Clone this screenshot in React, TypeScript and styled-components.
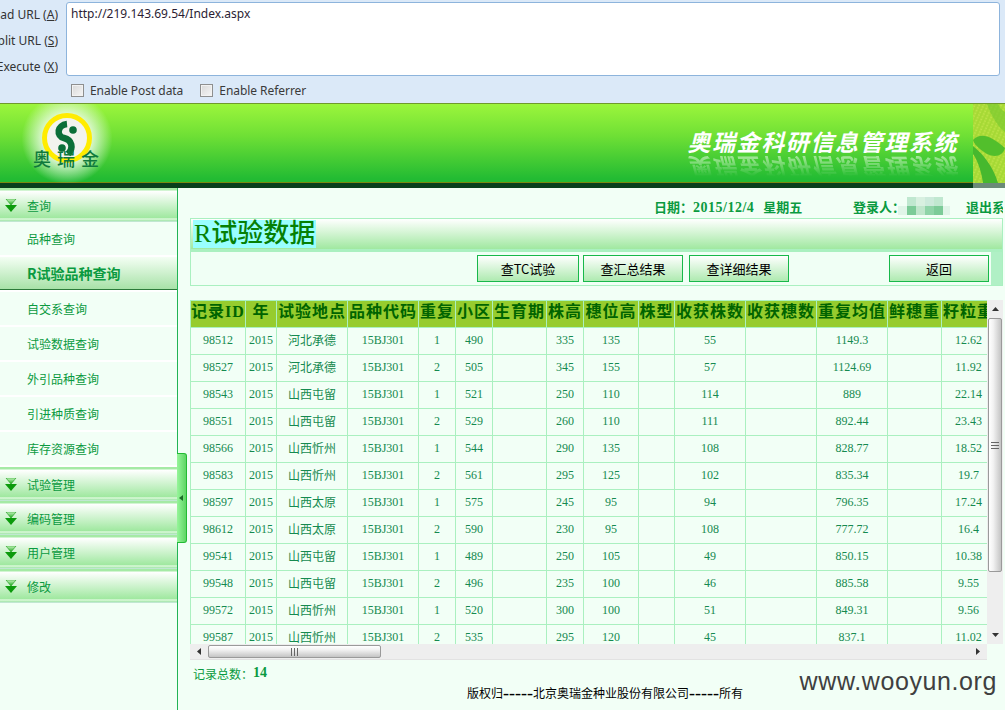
import React from "react";
import styled, { createGlobalStyle } from "styled-components";

const sansCn = `"Noto Sans CJK SC", "Liberation Sans", sans-serif`;
const serifCn = `"Liberation Serif", "Noto Sans CJK SC", serif`;

const GlobalStyle = createGlobalStyle`
  html, body {
    margin: 0;
    padding: 0;
    background: #f2fff6;
    overflow: hidden;
  }
  * {
    box-sizing: border-box;
  }
`;

const Page = styled.div`
  position: relative;
  width: 1005px;
  height: 710px;
  overflow: hidden;
  background: #f2fff6;
  font-family: ${serifCn};
  font-size: 12px;
`;

/* hackbar on top of the browser */
const Toolbar = styled.div`
  display: flex;
  height: 103px;
  padding: 2px 5px 0 0;
  background: #dbe9f8;
  font-family: "Noto Sans", "Liberation Sans", sans-serif;
  color: #333;
`;

const ActionList = styled.div`
  width: 58px;
  margin: -1px 8px 0 0;
  overflow: hidden;
`;

const Action = styled.div`
  display: flex;
  justify-content: flex-end;
  align-items: center;
  height: 26px;
  white-space: nowrap;
  u {
    text-decoration: underline;
  }
`;

const UrlColumn = styled.div`
  flex: 1;
  display: flex;
  flex-direction: column;
`;

const UrlBox = styled.textarea`
  display: block;
  width: 100%;
  height: 74px;
  padding: 3px 4px;
  border: 1px solid #8db4dc;
  border-radius: 3px;
  background: #fff;
  color: #2b1d33;
  font-family: "Noto Sans", "Liberation Sans", sans-serif;
  font-size: 12px;
  line-height: 16px;
  resize: none;
  outline: none;
  overflow: hidden;
`;

const OptionRow = styled.div`
  display: flex;
  gap: 17px;
  padding: 6px 0 0 5px;
`;

const Option = styled.label`
  display: flex;
  align-items: center;
  gap: 6px;
  height: 16px;
  font-size: 12px;
  letter-spacing: -0.05px;
  color: #3a3a3a;
`;

const CheckBox = styled.span`
  width: 13px;
  height: 13px;
  border: 1px solid #8e8f8f;
  background: linear-gradient(135deg, #d8d8d8, #f6f6f6);
  box-shadow: inset 0 0 0 1px #f2f2f2;
`;

/* site banner */
const Banner = styled.header`
  display: flex;
  align-items: flex-start;
  height: 85px;
  border-top: 1px solid #6f9a2c;
  background: linear-gradient(to bottom, #9cf53c 0, #6fe035 40%, #22bb33 95%);
  border-bottom: 5px solid #073f1c;
  box-shadow: inset 0 -1px 0 #7a8a10;
`;

const LogoGlow = styled.div`
  width: 90px;
  height: 79px;
  margin-left: 22px;
  background: radial-gradient(circle at 50% 44%, #ffffff 0, rgba(240, 252, 236, 0.95) 34%, rgba(255, 255, 255, 0) 72%);
`;

const BannerTitle = styled.div`
  margin-left: auto;
  margin-right: 15px;
  padding-top: 22px;
  display: flex;
  flex-direction: column;
  align-items: flex-end;
  font-family: ${sansCn};
  font-size: 23px;
  font-style: italic;
  font-weight: 700;
  line-height: 30px;
  letter-spacing: 1.6px;
  color: #fff;
  white-space: nowrap;
`;

const BannerReflection = styled.div`
  height: 24px;
  line-height: 24px;
  transform: scaleY(-1);
  opacity: 0.5;
  mask-image: linear-gradient(to top, #000, transparent 85%);
`;

const Corn = styled.svg`
  flex: none;
  display: block;
  width: 32px;
  height: 84px;
  margin-bottom: -5px;
`;

const Body = styled.div`
  display: flex;
  height: 522px;
`;

const Sidebar = styled.nav`
  position: relative;
  flex: none;
  width: 178px;
  border-right: 1px solid #22b455;
  color: #0a9a40;
  font-family: ${sansCn};
  font-size: 12px;
`;

const MenuHead = styled.div`
  display: flex;
  align-items: center;
  gap: 9px;
  height: 34px;
  padding: 1px 0 0 4px;
  background: linear-gradient(
    to bottom,
    #a5eaa5 0,
    #a5eaa5 2px,
    #ffffff 3px,
    #9fe89f 30px,
    #f4fff4 31px,
    #a5eaa5 32px,
    #c9e6e0 34px
  );
`;

const MenuItem = styled.div<{ $active?: boolean }>`
  display: flex;
  align-items: center;
  height: 33px;
  margin-bottom: 2px;
  padding: 0 0 1px 27px;
  font-size: ${(p) => (p.$active ? "14px" : "12px")};
  font-weight: ${(p) => (p.$active ? 700 : 400)};
  background: ${(p) => (p.$active ? "linear-gradient(to bottom, #f4fff4, #a8e2a8)" : "transparent")};
  border-bottom: ${(p) => (p.$active ? "1px solid #2c7a3a" : "none")};
  box-shadow: 0 2px 0 #ffffff;
`;

const MenuGroup = styled.div`
  height: 245px;
`;

const Collapser = styled.div`
  position: absolute;
  left: 100%;
  top: 265px;
  display: flex;
  align-items: center;
  width: 10px;
  height: 90px;
  padding-left: 2px;
  border: 1px solid #22bb33;
  border-left: none;
  border-radius: 0 3px 3px 0;
  background: linear-gradient(to right, #96f59a, #5fd565);
`;

const CollapserArrow = styled.span`
  width: 0;
  height: 0;
  border-top: 3.5px solid transparent;
  border-bottom: 3.5px solid transparent;
  border-right: 4px solid #1b6b27;
`;

const Main = styled.main`
  flex: 1;
  min-width: 0;
  padding: 0 2px 0 12px;
`;

const InfoBar = styled.div`
  display: flex;
  align-items: center;
  height: 30px;
  padding: 6px 0 0 464px;
  color: #0a9a40;
  font-family: ${sansCn};
  font-size: 13px;
  font-weight: 700;
  white-space: nowrap;
  overflow: hidden;
`;

const InfoDate = styled.span`
  width: 199px;
  flex: none;
  b {
    font-family: "Liberation Serif", serif;
    font-size: 14px;
    margin-right: 9px;
    letter-spacing: 0.5px;
  }
`;

const InfoUser = styled.span`
  flex: none;
`;

const Mosaic = styled.svg`
  flex: none;
  display: block;
  width: 52px;
  height: 18px;
  margin: 0 16px 0 -7px;
`;

const TitleBar = styled.div`
  height: 32px;
  padding: 1px 0 0 2px;
  border: 1px solid #aaf0c0;
  background: linear-gradient(to bottom, #ffffff, #a0e8a0);
`;

const TitleMark = styled.h1`
  display: inline-block;
  margin: 0;
  padding: 0 1px;
  height: 28px;
  background: #9ff;
  color: #058005;
  font-family: ${serifCn};
  font-size: 26px;
  font-weight: 500;
  line-height: 28px;
`;

const ButtonRow = styled.div`
  display: flex;
  align-items: center;
  height: 36px;
  padding-left: 286px;
  border: 1px solid #aaf0c0;
  border-top-width: 2px;
  background: linear-gradient(to right, #f0fff5 calc(100% - 11px), #b0f0c5 0);
`;

const Button = styled.button<{ $wide?: boolean; $gap?: number }>`
  width: ${(p) => (p.$wide ? 102 : 100)}px;
  height: 27px;
  margin-right: ${(p) => p.$gap ?? 0}px;
  padding: 0;
  border: 1px solid #18b84a;
  background: linear-gradient(to bottom, #ffffff, #aeeab0);
  color: #000;
  font-family: ${sansCn};
  font-size: 13px;
`;

const GridFrame = styled.div`
  display: grid;
  grid-template-columns: 797px 16px;
  grid-template-rows: 344px 16px;
  margin-top: 14px;
`;

const TableClip = styled.div`
  grid-column: 1;
  grid-row: 1;
  overflow: hidden;
`;

const DataTable = styled.table`
  width: 805px;
  table-layout: fixed;
  border-collapse: collapse;
  font-family: ${serifCn};
`;

const HeadCell = styled.th`
  height: 27px;
  padding: 0 0 4px;
  border: 1px solid #aaf0c0;
  background: #96cc2e;
  color: #006400;
  font-family: ${serifCn};
  font-size: 16px;
  font-weight: 700;
  line-height: 20px;
  letter-spacing: 1px;
  white-space: nowrap;
  overflow: hidden;
`;

const Cell = styled.td<{ $cn?: boolean }>`
  height: 27px;
  padding: 0 0 2px;
  border: 1px solid #aaf0c0;
  color: #158a50;
  font-family: ${(p) => (p.$cn ? sansCn : serifCn)};
  font-size: 12px;
  line-height: 16px;
  text-align: center;
  white-space: nowrap;
`;

const Column = styled.col<{ $w: number }>`
  width: ${(p) => p.$w}px;
`;

const VScroll = styled.div`
  display: flex;
  flex-direction: column;
  grid-column: 2;
  grid-row: 1;
  background: #eeeeee;
`;

const HScroll = styled.div`
  display: flex;
  align-items: stretch;
  grid-column: 1;
  grid-row: 2;
  background: #eeeeee;
  border-bottom: 1px solid #e2e2e2;
`;

const ArrowCell = styled.div<{ $w?: string; $h?: string }>`
  flex: none;
  display: flex;
  align-items: center;
  justify-content: center;
  width: ${(p) => p.$w ?? "auto"};
  height: ${(p) => p.$h ?? "auto"};
  color: #333;
`;

const Spacer = styled.div`
  flex: 1;
`;

const ThumbV = styled.div`
  flex: none;
  display: flex;
  align-items: center;
  justify-content: center;
  height: 254px;
  margin: 0 1px;
  border: 1px solid #9a9a9a;
  border-radius: 2px;
  background: linear-gradient(to right, #ffffff, #f2f2f2 35%, #c4c4c4);
`;

const ThumbH = styled.div`
  flex: none;
  display: flex;
  align-items: center;
  justify-content: center;
  width: 173px;
  margin: 1px 0;
  border: 1px solid #9a9a9a;
  border-radius: 2px;
  background: linear-gradient(to bottom, #ffffff, #f2f2f2 35%, #c4c4c4);
`;

const Grip = styled.svg`
  display: block;
`;

const TotalLine = styled.div`
  display: flex;
  align-items: center;
  height: 18px;
  margin-top: 4px;
  padding-left: 3px;
  color: #0a9a40;
  font-family: ${sansCn};
  font-size: 12px;
  b {
    font-family: ${serifCn};
    font-size: 14px;
  }
`;

const Copyright = styled.div`
  height: 16px;
  margin-top: 3px;
  padding-left: 277px;
  color: #000;
  font-family: ${sansCn};
  font-size: 12px;
  line-height: 16px;
  white-space: nowrap;
`;

const Dashes = styled.span`
  font-family: "Liberation Serif", serif;
  font-size: 18px;
  line-height: 0;
  vertical-align: -1px;
`;

const Watermark = styled.div`
  position: absolute;
  right: 8px;
  bottom: 14px;
  color: #3f4040;
  font-family: "Liberation Sans", sans-serif;
  font-size: 25px;
  line-height: 30px;
  letter-spacing: 0.6px;
`;

const DoubleArrow = () => (
  <svg width="14" height="14" viewBox="0 0 14 14">
    <defs>
      <linearGradient id="arrowTop" x1="0" y1="0" x2="0" y2="1">
        <stop offset="0" stopColor="#c8f5c0" />
        <stop offset="1" stopColor="#18a818" />
      </linearGradient>
    </defs>
    <polygon points="2,0 12,0 7,6" fill="url(#arrowTop)" stroke="#1a9a1a" strokeWidth="0.6" />
    <polygon points="1,6 13,6 7,13" fill="#0c9a0c" />
  </svg>
);

const Triangle = ({ dir }: { dir: "up" | "down" | "left" | "right" }) => {
  const points = {
    up: "0,4 7,4 3.5,0",
    down: "0,0 7,0 3.5,4",
    left: "4,0 4,7 0,3.5",
    right: "0,0 0,7 4,3.5",
  }[dir];
  const wide = dir === "up" || dir === "down";
  return (
    <svg width={wide ? 7 : 4} height={wide ? 4 : 7}>
      <polygon points={points} fill="#333" />
    </svg>
  );
};

const Logo = () => (
  <svg width="90" height="79" viewBox="0 0 90 79">
    <circle cx="45" cy="34" r="22.5" fill="#f2f3ee" stroke="#ffec00" strokeWidth="5" />
    <circle cx="51" cy="26" r="3.8" fill="#0a6f38" />
    <circle cx="40" cy="44" r="3.8" fill="#0a6f38" />
    <path d="M45 20 C35 21 34 32 42 34 C50 36 52 44 46 50" fill="none" stroke="#0a6f38" strokeWidth="6.5" />
    <text
      x="47"
      y="62"
      textAnchor="middle"
      fontFamily={`"Noto Sans CJK SC", sans-serif`}
      fontSize="18"
      fontWeight="500"
      letterSpacing="6"
      fill="#107a3c"
    >
      奥瑞金
    </text>
  </svg>
);

const CornArt = () => (
  <Corn viewBox="0 0 32 84" preserveAspectRatio="none">
    <defs>
      <pattern id="kernels" width="4" height="3" patternUnits="userSpaceOnUse" patternTransform="rotate(25)">
        <rect width="4" height="3" fill="#a6d935" />
        <circle cx="2" cy="1.5" r="1" fill="#bfe64a" />
      </pattern>
    </defs>
    <rect width="32" height="84" fill="url(#kernels)" />
    <path d="M14 0 C18 12 26 24 32 28 L32 8 C28 6 26 2 25 0 Z" fill="#7ccb30" opacity="0.7" />
    <path d="M0 36 C8 28 18 32 32 44 C30 52 22 54 14 50 C8 46 2 42 0 36 Z" fill="#52bf2c" />
    <path d="M0 42 C10 50 20 62 25 79 L10 79 C8 64 3 54 0 50 Z" fill="#46b82e" />
    <rect y="79" width="32" height="5" fill="#6b8a78" />
  </Corn>
);

const mosaicCells: [number, number, number, string][] = [
  [9, 0, 9, "#c0e8d0"],
  [18, 0, 9, "#d8f0e0"],
  [27, 0, 9, "#cceadb"],
  [36, 0, 9, "#c0e8d0"],
  [0, 9, 9, "#e0f5e8"],
  [9, 9, 9, "#7ccb98"],
  [18, 9, 9, "#c0e6cc"],
  [27, 9, 9, "#8fd4a8"],
  [36, 9, 9, "#7ccb98"],
  [45, 9, 7, "#e0f5e8"],
];

const columns = [55, 31, 71, 71, 37, 37, 54, 37, 55, 36, 71, 71, 71, 54, 54];

const headers = [
  "记录ID",
  "年",
  "试验地点",
  "品种代码",
  "重复",
  "小区",
  "生育期",
  "株高",
  "穗位高",
  "株型",
  "收获株数",
  "收获穗数",
  "重复均值",
  "鲜穗重",
  "籽粒重",
];

const rows = [
  ["98512", "河北承德", "1", "490", "335", "135", "55", "1149.3", "12.62"],
  ["98527", "河北承德", "2", "505", "345", "155", "57", "1124.69", "11.92"],
  ["98543", "山西屯留", "1", "521", "250", "110", "114", "889", "22.14"],
  ["98551", "山西屯留", "2", "529", "260", "110", "111", "892.44", "23.43"],
  ["98566", "山西忻州", "1", "544", "290", "135", "108", "828.77", "18.52"],
  ["98583", "山西忻州", "2", "561", "295", "125", "102", "835.34", "19.7"],
  ["98597", "山西太原", "1", "575", "245", "95", "94", "796.35", "17.24"],
  ["98612", "山西太原", "2", "590", "230", "95", "108", "777.72", "16.4"],
  ["99541", "山西屯留", "1", "489", "250", "105", "49", "850.15", "10.38"],
  ["99548", "山西屯留", "2", "496", "235", "100", "46", "885.58", "9.55"],
  ["99572", "山西忻州", "1", "520", "300", "100", "51", "849.31", "9.56"],
  ["99587", "山西忻州", "2", "535", "295", "120", "45", "837.1", "11.02"],
];

const subMenu = ["品种查询", "R试验品种查询", "自交系查询", "试验数据查询", "外引品种查询", "引进种质查询", "库存资源查询"];
const otherMenus = ["试验管理", "编码管理", "用户管理", "修改"];

export default function App() {
  return (
    <Page>
      <GlobalStyle />
      <Toolbar>
        <ActionList>
          <Action>
            Load URL (<u>A</u>)
          </Action>
          <Action>
            Split URL (<u>S</u>)
          </Action>
          <Action>
            Execute (<u>X</u>)
          </Action>
        </ActionList>
        <UrlColumn>
          <UrlBox readOnly defaultValue="http://219.143.69.54/Index.aspx" />
          <OptionRow>
            <Option>
              <CheckBox />
              Enable Post data
            </Option>
            <Option>
              <CheckBox />
              Enable Referrer
            </Option>
          </OptionRow>
        </UrlColumn>
      </Toolbar>

      <Banner>
        <LogoGlow>
          <Logo />
        </LogoGlow>
        <BannerTitle>
          奥瑞金科研信息管理系统
          <BannerReflection aria-hidden="true">奥瑞金科研信息管理系统</BannerReflection>
        </BannerTitle>
        <CornArt />
      </Banner>

      <Body>
        <Sidebar>
          <MenuHead>
            <DoubleArrow />
            查询
          </MenuHead>
          <MenuGroup>
            {subMenu.map((item, index) => (
              <MenuItem key={item} $active={index === 1}>
                {item}
              </MenuItem>
            ))}
          </MenuGroup>
          {otherMenus.map((item) => (
            <MenuHead key={item}>
              <DoubleArrow />
              {item}
            </MenuHead>
          ))}
          <Collapser>
            <CollapserArrow />
          </Collapser>
        </Sidebar>

        <Main>
          <InfoBar>
            <InfoDate>
              日期：<b>2015/12/4</b>星期五
            </InfoDate>
            <InfoUser>登录人：</InfoUser>
            <Mosaic viewBox="0 0 52 18">
              {mosaicCells.map(([x, y, w, fill]) => (
                <rect key={`${x}-${y}`} x={x} y={y} width={w} height="9" fill={fill} />
              ))}
            </Mosaic>
            <InfoUser>退出系统</InfoUser>
          </InfoBar>

          <TitleBar>
            <TitleMark>R试验数据</TitleMark>
          </TitleBar>
          <ButtonRow>
            <Button $wide $gap={4}>
              查TC试验
            </Button>
            <Button $gap={6}>查汇总结果</Button>
            <Button $gap={100}>查详细结果</Button>
            <Button>返回</Button>
          </ButtonRow>

          <GridFrame>
            <TableClip>
              <DataTable>
                <colgroup>
                  {columns.map((w, index) => (
                    <Column key={index} $w={w} />
                  ))}
                </colgroup>
                <thead>
                  <tr>
                    {headers.map((h) => (
                      <HeadCell key={h}>{h}</HeadCell>
                    ))}
                  </tr>
                </thead>
                <tbody>
                  {rows.map((r) => (
                    <tr key={r[0]}>
                      <Cell>{r[0]}</Cell>
                      <Cell>2015</Cell>
                      <Cell $cn>{r[1]}</Cell>
                      <Cell>15BJ301</Cell>
                      <Cell>{r[2]}</Cell>
                      <Cell>{r[3]}</Cell>
                      <Cell />
                      <Cell>{r[4]}</Cell>
                      <Cell>{r[5]}</Cell>
                      <Cell />
                      <Cell>{r[6]}</Cell>
                      <Cell />
                      <Cell>{r[7]}</Cell>
                      <Cell />
                      <Cell>{r[8]}</Cell>
                    </tr>
                  ))}
                </tbody>
              </DataTable>
            </TableClip>
            <VScroll>
              <ArrowCell $h="18px">
                <Triangle dir="up" />
              </ArrowCell>
              <ThumbV>
                <Grip width="8" height="7">
                  <path d="M0 .5H8M0 3.5H8M0 6.5H8" stroke="#666" />
                </Grip>
              </ThumbV>
              <Spacer />
              <ArrowCell $h="18px">
                <Triangle dir="down" />
              </ArrowCell>
            </VScroll>
            <HScroll>
              <ArrowCell $w="18px">
                <Triangle dir="left" />
              </ArrowCell>
              <ThumbH>
                <Grip width="7" height="8">
                  <path d="M.5 0V8M3.5 0V8M6.5 0V8" stroke="#666" />
                </Grip>
              </ThumbH>
              <Spacer />
              <ArrowCell $w="18px">
                <Triangle dir="right" />
              </ArrowCell>
            </HScroll>
          </GridFrame>

          <TotalLine>
            记录总数：<b>14</b>
          </TotalLine>
          <Copyright>
            版权归<Dashes>-----</Dashes>北京奥瑞金种业股份有限公司<Dashes>-----</Dashes>所有
          </Copyright>
        </Main>
      </Body>
      <Watermark>www.wooyun.org</Watermark>
    </Page>
  );
}
